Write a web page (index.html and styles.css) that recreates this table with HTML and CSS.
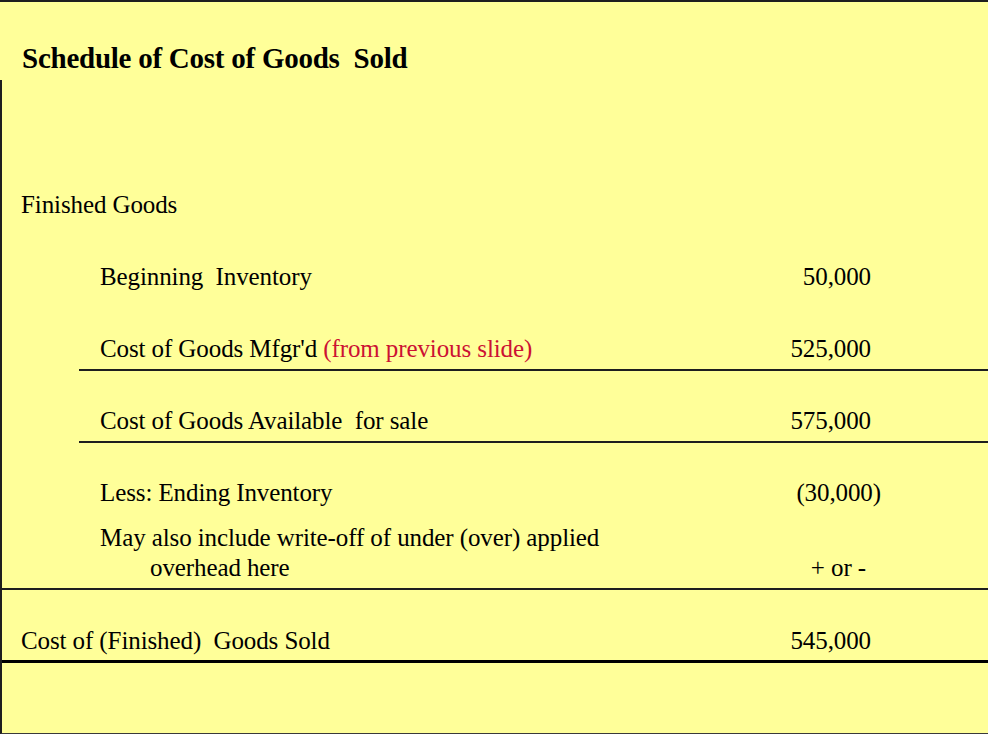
FILE: index.html
```html
<!DOCTYPE html>
<html>
<head>
<meta charset="utf-8">
<link rel="stylesheet" href="styles.css">
</head>
<body>
<div class="slide">
  <div class="header"><h1 class="title">Schedule of Cost of Goods&nbsp; Sold</h1></div>
  <div class="body">
    <div class="row top">Finished Goods</div>
    <div class="row ind gap">
      <span>Beginning&nbsp; Inventory</span><span class="num">50,000</span>
    </div>
    <div class="row ind gap rule">
      <span>Cost of Goods Mfgr'd <span class="red">(from previous slide)</span></span><span class="num">525,000</span>
    </div>
    <div class="row ind gap2 rule">
      <span>Cost of Goods Available&nbsp; for sale</span><span class="num">575,000</span>
    </div>
    <div class="row ind gap2">
      <span>Less: Ending Inventory</span><span class="num paren">(30,000)</span>
    </div>
    <div class="block rule-full">
      <div class="row ind">May also include write-off of under (over) applied</div>
      <div class="row ind2">
        <span>overhead here</span><span class="num pm">+ or -</span>
      </div>
    </div>
    <div class="row total">
      <span>Cost of (Finished)&nbsp; Goods Sold</span><span class="num">545,000</span>
    </div>
  </div>
</div>
</body>
</html>
```

FILE: styles.css
```css
html, body {
  margin: 0;
  padding: 0;
  background: #ffff99;
}
.slide {
  width: 988px;
  height: 734px;
  box-sizing: border-box;
  background: #ffff99;
  border-top: 2px solid #1e1e1e;
  font-family: "Liberation Serif", "Times New Roman", serif;
  color: #000;
  display: flex;
  flex-direction: column;
  overflow: hidden;
}
.header {
  height: 78px;
  box-sizing: border-box;
  padding: 40px 0 0 22px;
}
.title {
  margin: 0;
  font-size: 29px;
  line-height: 32px;
  font-weight: bold;
  letter-spacing: -0.25px;
}
.body {
  flex: 1;
  border-left: 2px solid #1e1e1e;
  border-bottom: 1px solid #3a3a3a;
  padding-top: 110px;
  font-size: 25px;
  letter-spacing: -0.1px;
}
.row {
  display: flex;
  justify-content: space-between;
  line-height: 30px;
  height: 30px;
  padding-right: 117px;
  white-space: nowrap;
}
.top {
  padding-left: 19px;
}
.ind {
  margin-left: 77px;
  padding-left: 21px;
}
.ind2 {
  margin-left: 77px;
  padding-left: 71px;
}
.gap {
  margin-top: 42px;
}
.gap2 {
  margin-top: 35px;
}
.rule {
  padding-bottom: 5px;
  border-bottom: 2px solid #1e1e1e;
}
.block {
  margin-top: 15px;
  padding-bottom: 5px;
  border-bottom: 2px solid #1e1e1e;
}
.total {
  margin-top: 36px;
  padding-left: 19px;
  padding-bottom: 4px;
  border-bottom: 3px solid #000;
}
.num {
  text-align: right;
}
.paren {
  margin-right: -10px;
}
.pm {
  margin-right: 5px;
}
.red {
  color: #cc1133;
}
```
